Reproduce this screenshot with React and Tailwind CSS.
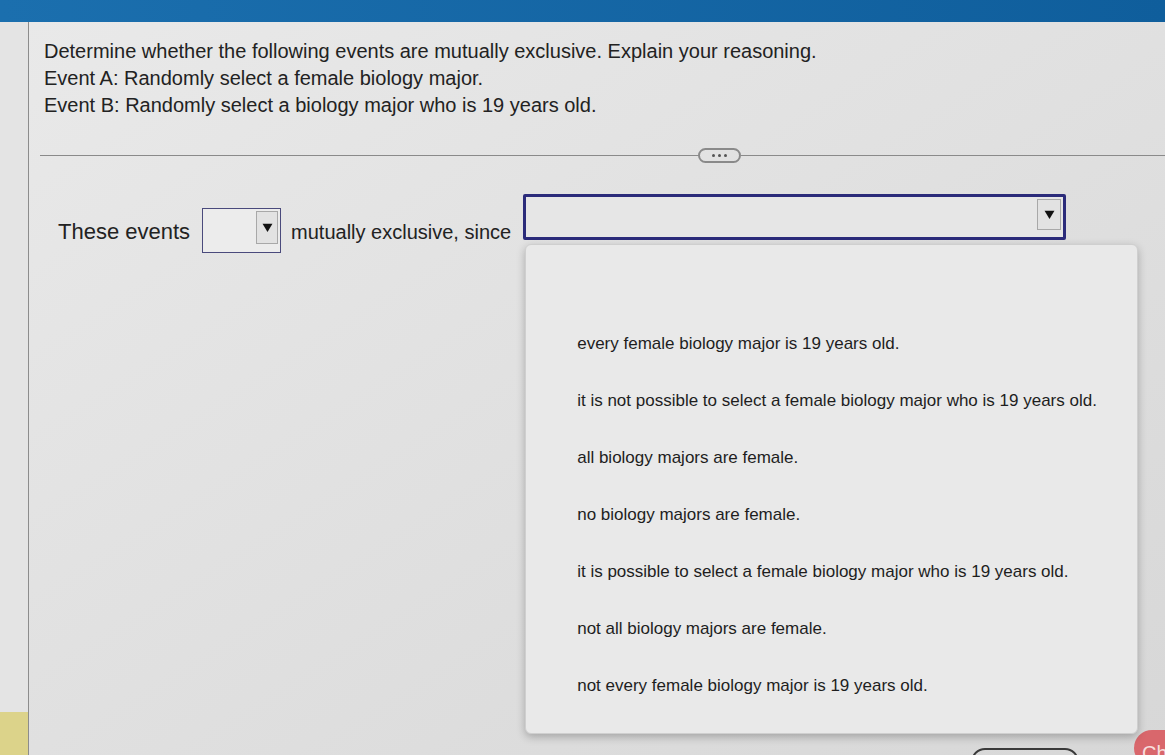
import React from "react";

const options = [
    "every female biology major is 19 years old.",
    "it is not possible to select a female biology major who is 19 years old.",
    "all biology majors are female.",
    "no biology majors are female.",
    "it is possible to select a female biology major who is 19 years old.",
    "not all biology majors are female.",
    "not every female biology major is 19 years old.",
];

const Arrow = ({ className }) => (
    <div className={"flex items-center justify-center border border-[#a8a8a8] bg-[#e2e2e2] " + className}>
        <svg width="11" height="11" viewBox="0 0 10 10">
            <path d="M0.5 1.5 L9.5 1.5 L5 9 Z" fill="#111" />
        </svg>
    </div>
);

const App = () => {
    return (
        <div
            className="relative flex h-[755px] w-[1165px] flex-col overflow-hidden bg-[#dcdcdc] text-[#222]"
            style={{ fontFamily: '"Liberation Sans", Arial, sans-serif' }}
        >
            {/* top bar */}
            <div className="h-[22px] shrink-0 bg-linear-to-r from-[#1b6fae] to-[#0f5e9c]" />

            <div className="flex flex-1">
                {/* left gutter */}
                <div className="flex w-[29px] shrink-0 flex-col border-r border-[#8c8c8c] bg-[#e4e4e4]">
                    <div className="mt-auto h-[43px] bg-[#dcd38a]" />
                </div>

                {/* main */}
                <div className="flex flex-1 flex-col bg-linear-to-br from-[#e9e9e9] via-[#e0e0e0] to-[#d7d7d7]">
                    <div className="pl-[15px] pt-[16px] text-[20px] leading-[27px]">
                        <p>Determine whether the following events are mutually exclusive. Explain your reasoning.</p>
                        <p>Event A: Randomly select a female biology major.</p>
                        <p>Event B: Randomly select a biology major who is 19 years old.</p>
                    </div>

                    {/* divider */}
                    <div className="ml-[11px] mt-[29px] flex items-center">
                        <div className="h-px w-[658px] bg-[#8a8a8a]" />
                        <div className="flex h-[15px] w-[43px] items-center justify-center gap-[3px] rounded-full border-2 border-[#8a8a8a]">
                            <span className="h-[3px] w-[3px] rounded-full bg-[#555]" />
                            <span className="h-[3px] w-[3px] rounded-full bg-[#555]" />
                            <span className="h-[3px] w-[3px] rounded-full bg-[#555]" />
                        </div>
                        <div className="h-px flex-1 bg-[#8a8a8a]" />
                    </div>

                    {/* answer row */}
                    <div className="mt-[31px] flex items-start pl-[29px] text-[20px] leading-[24px]">
                        <span className="mt-[26px] text-[22px]">These events</span>
                        <div className="ml-[12px] mt-[14px] flex h-[45px] w-[79px] items-start justify-end border border-[#4a4a7c] bg-[#ececec] p-[2px]">
                            <Arrow className="h-[33px] w-[22px]" />
                        </div>
                        <span className="ml-[10px] mt-[26px]">mutually exclusive, since</span>
                        <div className="relative ml-[12px]">
                            <div className="flex h-[46px] w-[543px] items-start justify-end rounded-[2px] border-[3px] border-[#2b2b7a] bg-[#e6e6e6] p-[2px]">
                                <Arrow className="h-[31px] w-[24px]" />
                            </div>
                            {/* open list */}
                            <div className="absolute left-[2px] top-[50px] w-[613px] rounded-md border border-[#cfcfcf] bg-[#e9e9e9] pb-[19px] pt-[70px] shadow-[0_3px_8px_rgba(0,0,0,0.25)]">
                                {options.map(o => (
                                    <div key={o} className="flex h-[57px] items-center pl-[51px] text-[17px] leading-[20px] text-[#1e1e1e]">
                                        {o}
                                    </div>
                                ))}
                            </div>
                        </div>
                    </div>

                    {/* footer buttons, cut by the screen edge */}
                    <div className="mt-auto flex h-[25px] items-start">
                        <div className="ml-[942px] mt-[18px] flex h-[34px] w-[108px] items-start justify-center rounded-[14px] border-2 border-[#3a3a3a] pt-[4px] text-[17px] text-[#333]">
                            Clear all
                        </div>
                        <div className="ml-[55px] flex h-[36px] w-[60px] items-start rounded-l-full bg-[#d9676c] pl-[8px] pt-[8px] text-[20px] text-[#f7dede]">
                            Ch
                        </div>
                    </div>
                </div>
            </div>
        </div>
    );
};

export default App;
